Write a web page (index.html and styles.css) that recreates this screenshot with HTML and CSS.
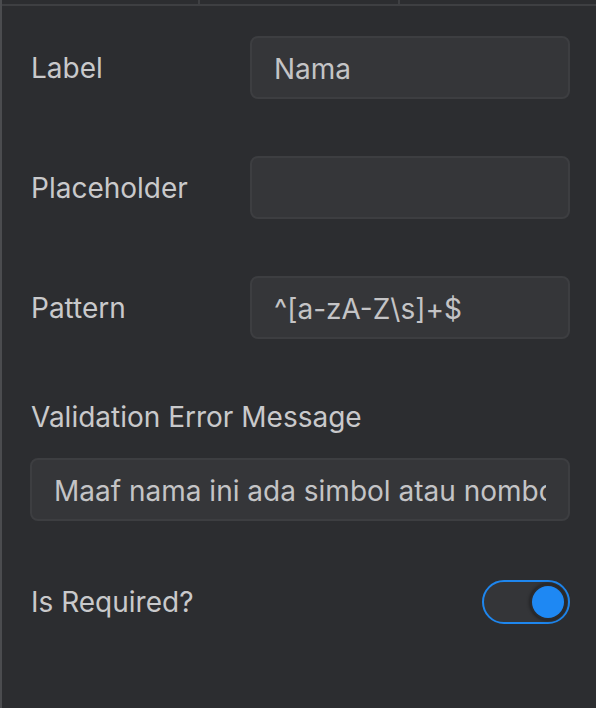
FILE: index.html
```html
<!DOCTYPE html>
<html lang="ms">
<head>
<meta charset="utf-8">
<title>Field settings</title>
<link rel="stylesheet" href="styles.css">
</head>
<body>
<div class="panel">
  <div class="tabs">
    <div class="tab"></div>
    <div class="tab"></div>
    <div class="tab"></div>
  </div>
  <div class="content">
    <div class="row">
      <label class="label">Label</label>
      <div class="input"><span class="value">Nama</span></div>
    </div>
    <div class="row">
      <label class="label">Placeholder</label>
      <div class="input"><span class="value"></span></div>
    </div>
    <div class="row">
      <label class="label">Pattern</label>
      <div class="input"><span class="value">^[a-zA-Z\s]+$</span></div>
    </div>
    <div class="stack">
      <label class="label">Validation Error Message</label>
      <div class="input"><span class="value">Maaf nama ini ada simbol atau nombor</span></div>
    </div>
    <div class="row toggle-row">
      <label class="label">Is Required?</label>
      <div class="toggle on"><span class="knob"></span></div>
    </div>
  </div>
</div>
</body>
</html>
```
FILE: styles.css
```css
* { box-sizing: border-box; }
html, body { margin: 0; padding: 0; background: #2c2d30; }
body {
  font-family: Inter, "Noto Sans", "Liberation Sans", sans-serif;
  color: #c9c9cb;
}
.panel {
  border-left: 2px solid #4b4c4f;
  height: 708px;
  overflow: hidden;
}
.tabs {
  display: grid;
  grid-template-columns: 198px 200px 1fr;
  height: 6px;
  border-bottom: 2px solid #3e3f42;
}
.tab { border-right: 2px solid #3e3f42; }
.tab:last-child { border-right: none; }
.content {
  padding: 30px 26px 0 28px;
  display: flex;
  flex-direction: column;
}
.row {
  display: grid;
  grid-template-columns: 220px 1fr;
  align-items: center;
  margin-bottom: 57px;
}
.label {
  font-size: 28px;
  line-height: 34px;
  padding-left: 1px;
}
.input {
  height: 63px;
  background: #353639;
  border: 2px solid #3d3e41;
  border-radius: 8px;
  padding: 2px 22px 0 22px;
  display: flex;
  align-items: center;
  font-size: 28px;
  color: #c4c4c6;
  min-width: 0;
}
.value {
  flex: 1;
  min-width: 0;
  white-space: nowrap;
  overflow: hidden;
  text-overflow: clip;
  line-height: 34px;
}
.stack {
  display: flex;
  flex-direction: column;
  gap: 24px;
  margin-top: 4px;
  margin-bottom: 59px;
}
.toggle-row { grid-template-columns: 1fr auto; margin-top: 0; }
.toggle {
  width: 88px;
  height: 44px;
  border-radius: 22px;
  border: 2px solid #1e86ee;
  background: #343538;
  display: flex;
  align-items: center;
  justify-content: flex-end;
  padding-right: 4px;
}
.knob {
  width: 32px;
  height: 32px;
  border-radius: 50%;
  background: #1e88f3;
  box-shadow: 0 0 0 2px #2a2b2e, 0 0 3px 3px rgba(0,0,0,0.35);
}
```
